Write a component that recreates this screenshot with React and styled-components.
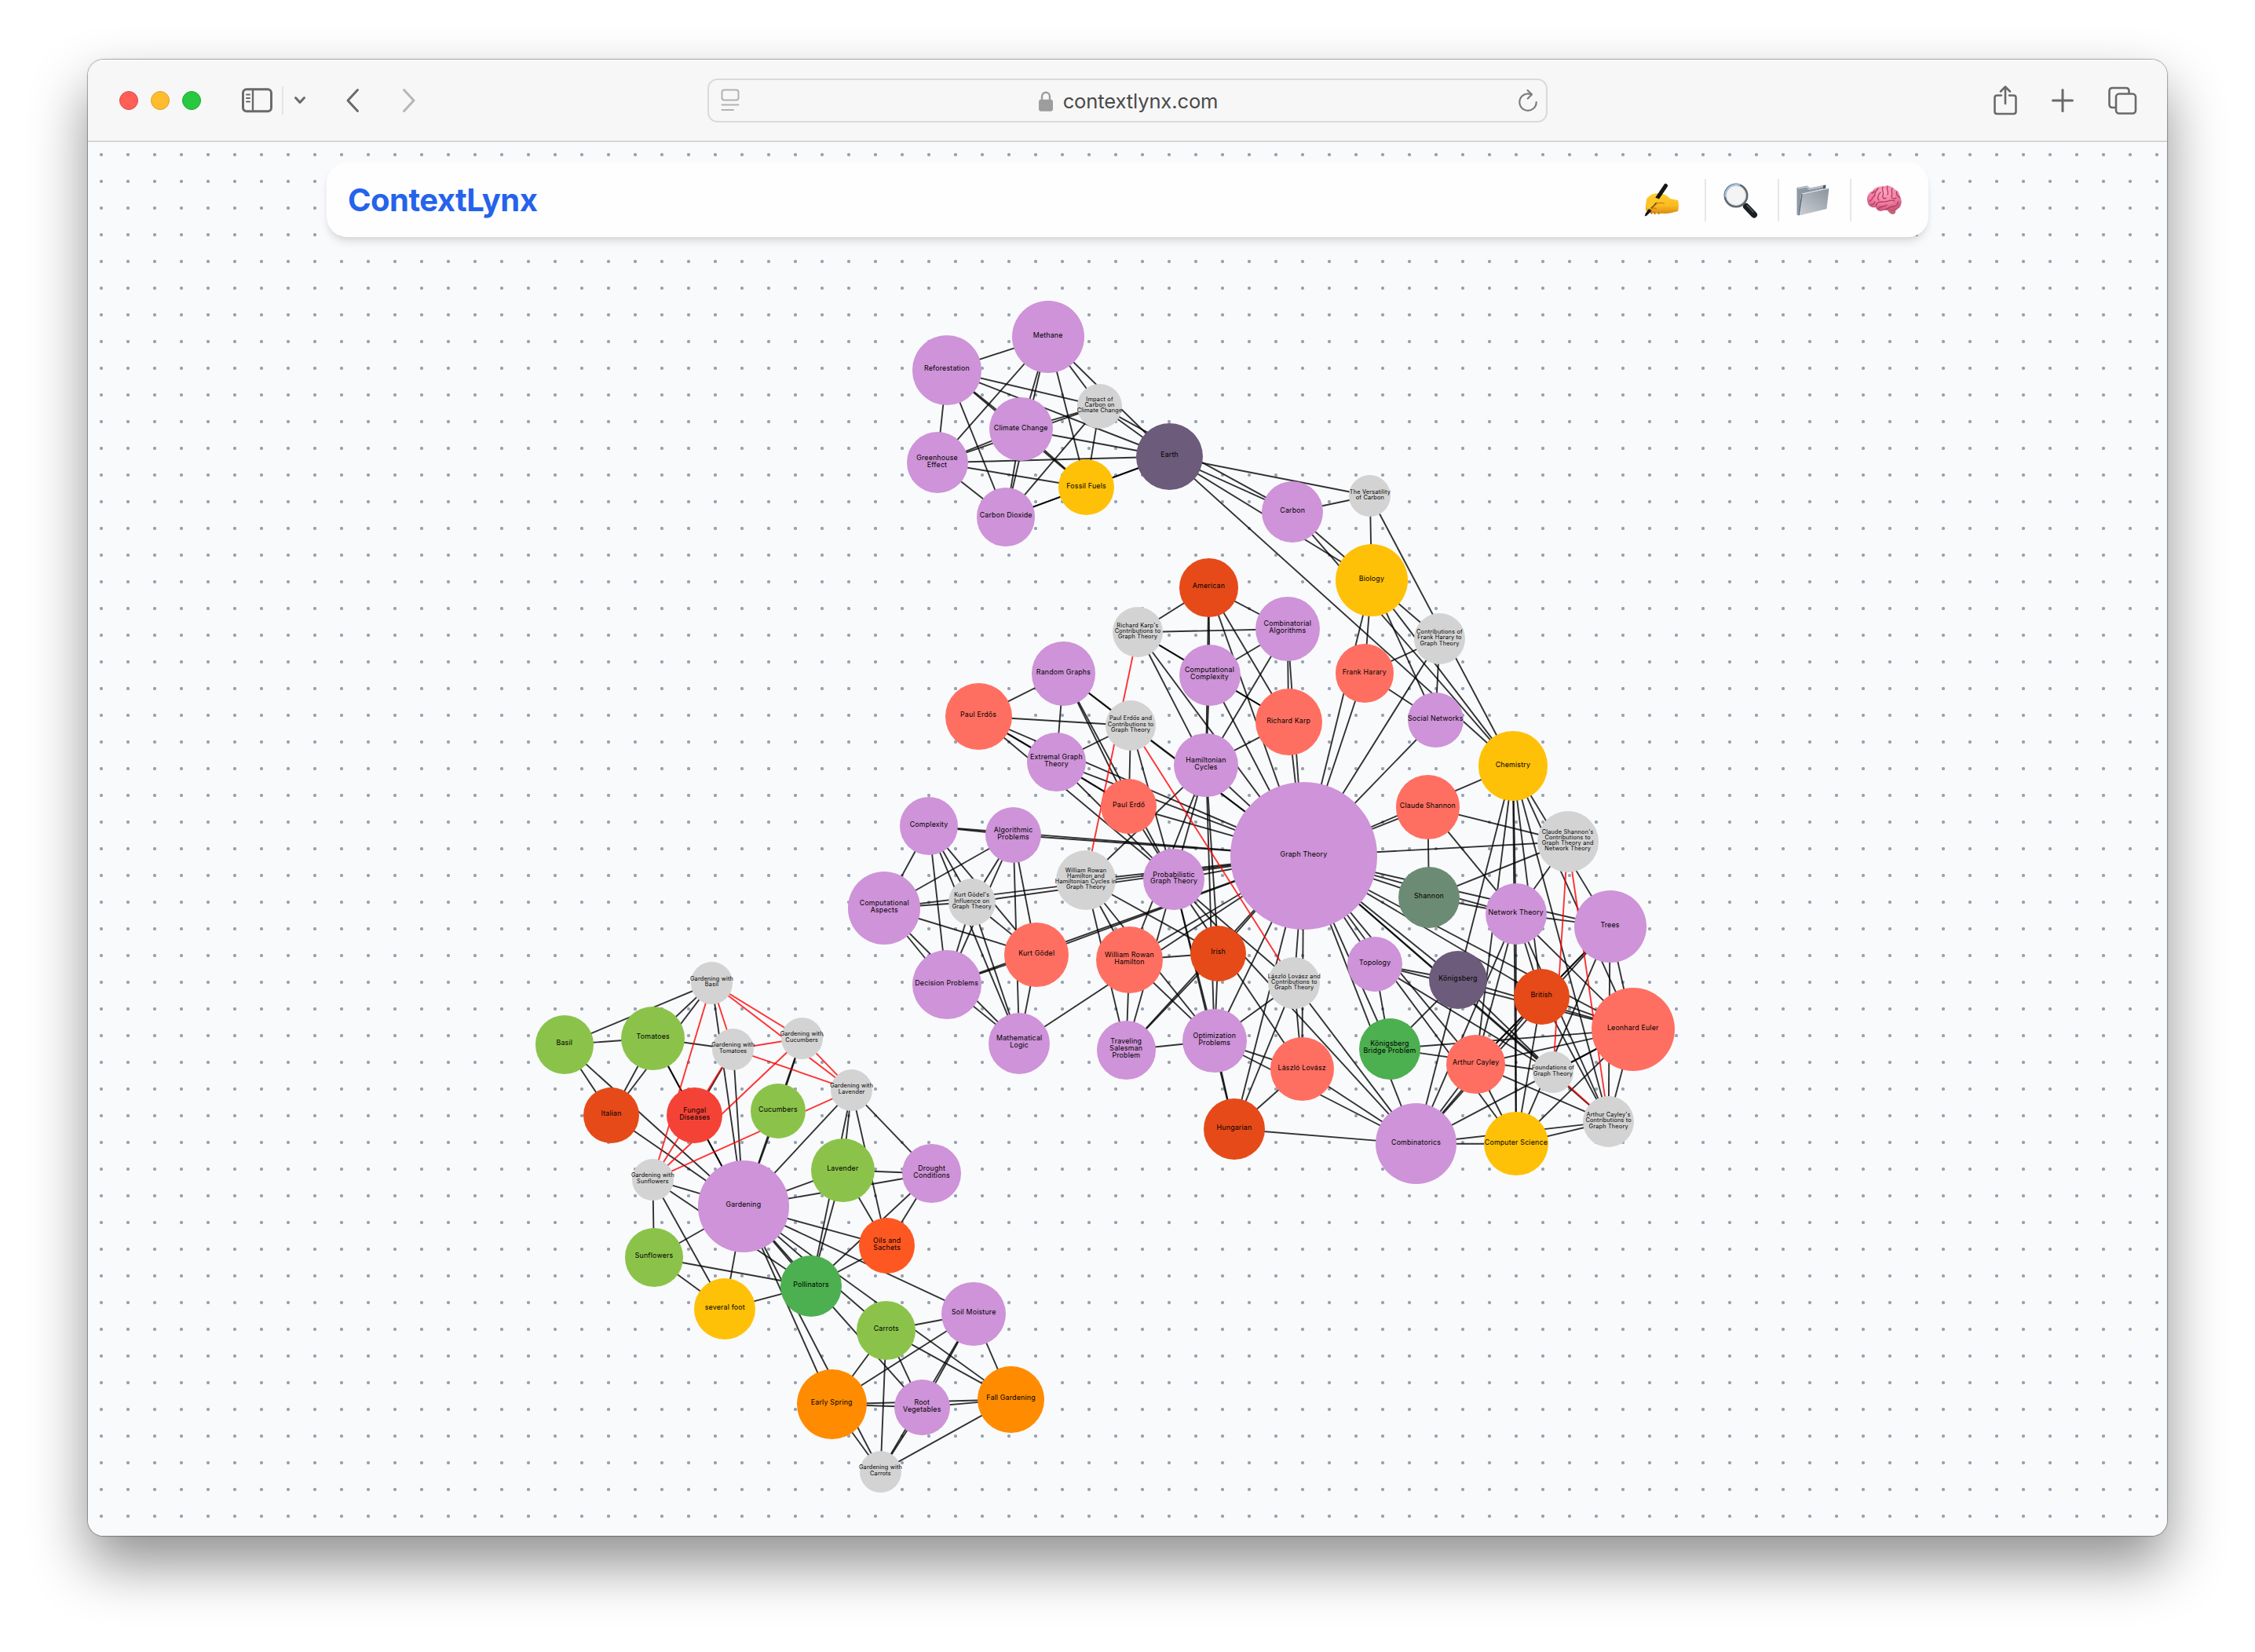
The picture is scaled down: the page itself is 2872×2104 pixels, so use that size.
import React from "react";
import styled, { createGlobalStyle } from "styled-components";

const GlobalStyle = createGlobalStyle`
  * { box-sizing: border-box; }
  html, body { margin: 0; padding: 0; background: #ffffff; }
  body { font-family: Inter, "Liberation Sans", sans-serif; }
`;

const Desktop = styled.div`
  width: 2872px;
  height: 2104px;
  padding: 76px 112px 148px;
  display: flex;
  background: #ffffff;
  overflow: hidden;
`;

const BrowserWindow = styled.div`
  flex: 1;
  display: flex;
  flex-direction: column;
  border-radius: 20px;
  overflow: hidden;
  background: #f9fafc;
  box-shadow: 0 0 0 1px rgba(0, 0, 0, 0.22), 0 0 3px rgba(0, 0, 0, 0.25),
    0 36px 72px rgba(0, 0, 0, 0.44);
`;

const Toolbar = styled.header`
  flex: none;
  height: 105px;
  display: grid;
  grid-template-columns: 789px 1070px 1fr;
  background: #f7f7f7;
  border-bottom: 2px solid #d6d6d6;
  box-shadow: inset 0 1px 0 #ffffff;
`;

const ToolbarLeft = styled.div`
  display: flex;
  align-items: center;
  padding-left: 40px;
`;

const Lights = styled.div`
  display: flex;
  gap: 16px;
  margin-right: 50px;
`;

const Light = styled.span`
  width: 24px;
  height: 24px;
  border-radius: 50%;
  background: ${(p) => p.$fill};
  border: 1px solid ${(p) => p.$edge};
`;

const Divider = styled.span`
  width: 2px;
  height: 36px;
  margin-left: 11px;
  background: #e4e4e4;
`;

const Glyph = styled.svg`
  display: block;
  flex: none;
  width: ${(p) => p.$w}px;
  height: ${(p) => p.$h}px;
  margin-left: ${(p) => p.$ml || 0}px;
  fill: none;
  stroke: ${(p) => p.$color || "#6a6a6a"};
  stroke-width: ${(p) => p.$sw || 2.6};
  stroke-linecap: round;
  stroke-linejoin: round;
`;

const AddressBar = styled.div`
  height: 56px;
  margin-top: 24px;
  padding: 0 10px 0 15px;
  display: grid;
  grid-template-columns: 40px 1fr 40px;
  align-items: center;
  border: 2px solid #dadada;
  border-radius: 13px;
  background: #f7f7f7;
`;

const Address = styled.div`
  display: flex;
  align-items: center;
  justify-content: center;
  gap: 13px;
  padding: 2px 3px 0 0;
  font-size: 25.6px;
  line-height: 30px;
  color: #4a4a4a;
`;

const Host = styled.span`
  letter-spacing: -0.15px;
`;

const ReloadSlot = styled.div`
  display: flex;
  justify-content: flex-end;
`;

const ToolbarRight = styled.div`
  display: flex;
  align-items: center;
  justify-content: flex-end;
  padding-right: 38px;
  gap: 43px;
`;

const Canvas = styled.main`
  position: relative;
  flex: 1;
  background-color: #f9fafc;
  background-image: radial-gradient(circle at center, #9aa3b2 1.7px, rgba(154, 163, 178, 0) 2.5px);
  background-size: 34px 34px;
  background-position: 0 -1px;
`;

const NavBar = styled.nav`
  height: 95px;
  margin: 26px 304px 0;
  padding: 0 15px 0 27px;
  display: flex;
  align-items: center;
  justify-content: space-between;
  border-radius: 26px;
  background: #fefefe;
  box-shadow: 0 8px 12px -2px rgba(0, 0, 0, 0.1), 0 4px 8px -4px rgba(0, 0, 0, 0.1);
`;

const Brand = styled.h1`
  margin: 0;
  padding-top: 1px;
  font-size: 40px;
  font-weight: 700;
  line-height: 56px;
  letter-spacing: -0.5px;
  color: #2563eb;
`;

const NavItems = styled.div`
  display: flex;
  align-items: center;
  height: 54px;
`;

const NavItem = styled.div`
  height: 54px;
  width: ${(p) => p.$w}px;
  padding-right: ${(p) => p.$shift || 0}px;
  display: flex;
  align-items: center;
  justify-content: center;
  border-left: ${(p) => (p.$first ? "0" : "2px solid #e5e7eb")};
`;

const Emoji = styled.svg`
  display: block;
  flex: none;
  width: 46px;
  height: 46px;
`;

const EdgeLayer = styled.svg`
  position: absolute;
  left: 0;
  top: 0;
  width: 2648px;
  height: 1775px;
`;

const Edge = styled.line`
  stroke: ${(p) => (p.$link ? "#ff0000" : "#000000")};
  stroke-width: 1.9;
  stroke-opacity: 0.8;
`;

const NODE_COLORS = {
  concept: "#ce93d8",
  note: "#d3d3d3",
  place: "#6c5b7b",
  field: "#ffc107",
  nationality: "#e64a19",
  person: "#ff6f61",
  org: "#6c8b74",
  plant: "#8bc34a",
  disease: "#f44336",
  problem: "#4caf50",
  product: "#ff5722",
  season: "#ff8c00",
};

const Node = styled.div`
  position: absolute;
  display: flex;
  align-items: center;
  justify-content: center;
  padding-bottom: 3.5px;
  border-radius: 50%;
  text-align: center;
  white-space: pre;
  color: #000000;
  background: ${(p) => NODE_COLORS[p.$kind]};
  font-size: ${(p) => (p.$kind === "note" ? 7.3 : 8.8)}px;
  line-height: ${(p) => (p.$kind === "note" ? 7.2 : 8.8)}px;
  letter-spacing: 0.2px;
`;

const ORIGIN_X = 112;
const ORIGIN_Y = 181;

// id: [x, y, radius, kind, label]
const NODES = {
  M: [1334.7, 429.3, 46.1, "concept", "Methane"],
  R: [1205.9, 471.3, 44.3, "concept", "Reforestation"],
  C: [1300.2, 546.7, 40.7, "concept", "Climate Change"],
  G: [1193.5, 589.3, 39, "concept", "Greenhouse\nEffect"],
  D: [1281.2, 658.3, 37.3, "concept", "Carbon Dioxide"],
  F: [1383.6, 620.7, 35.4, "field", "Fossil Fuels"],
  I: [1400.6, 517.3, 28.3, "note", "Impact of\nCarbon on\nClimate Change"],
  E: [1489.6, 581.5, 42.6, "place", "Earth"],
  Cn: [1646.2, 652.2, 38.9, "concept", "Carbon"],
  V: [1744.9, 631.5, 26.5, "note", "The Versatility\nof Carbon"],
  Bi: [1746.9, 739.3, 46, "field", "Biology"],
  Am: [1539.4, 748.3, 37.3, "nationality", "American"],
  RKc: [1449, 805.3, 32.2, "note", "Richard Karp's\nContributions to\nGraph Theory"],
  CA: [1639.8, 801, 40.9, "concept", "Combinatorial\nAlgorithms"],
  CC: [1540.5, 860, 39, "concept", "Computational\nComplexity"],
  RG: [1354.5, 858, 40.8, "concept", "Random Graphs"],
  PEs: [1246.1, 912.3, 42.6, "person", "Paul Erdős"],
  PEc: [1440.1, 924, 32, "note", "Paul Erdős and\nContributions to\nGraph Theory"],
  Ex: [1345.4, 970.7, 37.3, "concept", "Extremal Graph\nTheory"],
  Ha: [1536, 974.7, 40.7, "concept", "Hamiltonian\nCycles"],
  RK: [1641.2, 919.7, 42.6, "person", "Richard Karp"],
  PE: [1437.7, 1027, 35.4, "person", "Paul Erdő"],
  Cx: [1183.1, 1052.2, 37.3, "concept", "Complexity"],
  Al: [1290.6, 1063.5, 35.5, "concept", "Algorithmic\nProblems"],
  FH: [1737.8, 857.7, 37.3, "person", "Frank Harary"],
  FHc: [1833.5, 813.7, 32.5, "note", "Contributions of\nFrank Harary to\nGraph Theory"],
  SN: [1828.2, 917, 35.4, "concept", "Social Networks"],
  Ch: [1926.9, 975.7, 44.3, "field", "Chemistry"],
  CS: [1818.4, 1027.8, 40.8, "person", "Claude Shannon"],
  CSn: [1996.7, 1072, 39, "note", "Claude Shannon's\nContributions to\nGraph Theory and\nNetwork Theory"],
  GT: [1660.4, 1090.2, 93.8, "concept", "Graph Theory"],
  Sh: [1820, 1142.7, 39, "org", "Shannon"],
  NT: [1930.7, 1164.3, 38.9, "concept", "Network Theory"],
  Tr: [2050.5, 1180, 46, "concept", "Trees"],
  To: [1751.2, 1228, 35.3, "concept", "Topology"],
  K: [1857, 1248, 37.2, "place", "Königsberg"],
  Br: [1963.2, 1269.3, 35.4, "nationality", "British"],
  LE: [2079.7, 1311.3, 53.2, "person", "Leonhard Euler"],
  KB: [1770, 1335.7, 38.9, "problem", "Königsberg\nBridge Problem"],
  AC: [1879.7, 1355.3, 37.3, "person", "Arthur Cayley"],
  Fo: [1978.1, 1365.3, 26.4, "note", "Foundations of\nGraph Theory"],
  ACn: [2048.7, 1428.7, 32.6, "note", "Arthur Cayley's\nContributions to\nGraph Theory"],
  Co: [1803.5, 1456.8, 51.4, "concept", "Combinatorics"],
  Cp: [1930.9, 1456.7, 40.7, "field", "Computer Science"],
  LLc: [1648.3, 1252.2, 33.2, "note", "László Lovász and\nContributions to\nGraph Theory"],
  LL: [1658.2, 1361.7, 40.7, "person", "László Lovász"],
  Hu: [1572, 1438, 39, "nationality", "Hungarian"],
  Op: [1546.8, 1325.5, 40.8, "concept", "Optimization\nProblems"],
  TS: [1434.3, 1337.3, 37.3, "concept", "Traveling\nSalesman\nProblem"],
  Ir: [1551.6, 1214.2, 35.4, "nationality", "Irish"],
  WH: [1438.4, 1222.5, 42.5, "person", "William Rowan\nHamilton"],
  Pr: [1495.1, 1120.2, 38.9, "concept", "Probabilistic\nGraph Theory"],
  WHc: [1383, 1121, 38, "note", "William Rowan\nHamilton and\nHamiltonian Cycles in\nGraph Theory"],
  KGc: [1237.8, 1149, 30, "note", "Kurt Gödel's\nInfluence on\nGraph Theory"],
  CAs: [1126.3, 1156.5, 46.1, "concept", "Computational\nAspects"],
  KG: [1320.2, 1215.8, 40.8, "person", "Kurt Gödel"],
  DP: [1205.7, 1254, 44.2, "concept", "Decision Problems"],
  ML: [1298.2, 1328.8, 39, "concept", "Mathematical\nLogic"],
  gB: [906.5, 1252, 26.6, "note", "Gardening with\nBasil"],
  Tm: [831.8, 1322.3, 40.7, "plant", "Tomatoes"],
  Ba: [718.8, 1330.3, 37.3, "plant", "Basil"],
  gT: [933.7, 1336.3, 26.5, "note", "Gardening with\nTomatoes"],
  gC: [1021.2, 1322.3, 26.5, "note", "Gardening with\nCucumbers"],
  gL: [1084.7, 1388.3, 26.5, "note", "Gardening with\nLavender"],
  It: [778.6, 1420.5, 35.4, "nationality", "Italian"],
  Fu: [884.8, 1420.5, 35.4, "disease", "Fungal\nDiseases"],
  Cu: [991, 1415, 35.4, "plant", "Cucumbers"],
  gS: [831.4, 1502.3, 26.6, "note", "Gardening with\nSunflowers"],
  Ga: [946.9, 1536.5, 58.4, "concept", "Gardening"],
  La: [1073.3, 1490.3, 40.7, "plant", "Lavender"],
  Dr: [1186.6, 1494.7, 37.3, "concept", "Drought\nConditions"],
  Oi: [1129.7, 1586.7, 35.4, "product", "Oils and\nSachets"],
  Sf: [833, 1601.5, 37.4, "plant", "Sunflowers"],
  sf: [923.3, 1667.2, 39, "field", "several foot"],
  Po: [1033, 1638, 39, "problem", "Pollinators"],
  Ca: [1128.7, 1694.3, 37.3, "plant", "Carrots"],
  So: [1240.2, 1673.3, 40.8, "concept", "Soil Moisture"],
  ES: [1059.3, 1788.5, 44.4, "season", "Early Spring"],
  Rt: [1174.3, 1792.3, 35.5, "concept", "Root\nVegetables"],
  Fa: [1287.5, 1782.3, 42.6, "season", "Fall Gardening"],
  gR: [1121.5, 1874.3, 26.6, "note", "Gardening with\nCarrots"],
};

const EDGES = {
  M: "R G C D F I E",
  R: "I E C F G D",
  G: "C I E F D",
  C: "I E F D",
  D: "I F E",
  F: "I E",
  I: "E Cn",
  E: "V Cn Bi Ch",
  Cn: "V Bi Ch",
  V: "Bi Ch",
  Bi: "FH GT FHc SN Ch",
  FHc: "FH SN GT",
  FH: "GT SN",
  SN: "GT",
  Am: "RKc CA CC Ha RK GT",
  RKc: "CA CC RK Ha GT",
  CC: "CA RK Ha GT",
  CA: "RK GT Ha",
  RK: "GT Ha",
  Ha: "GT WHc WH TS Ir Op",
  RG: "PEs PEc Ex PE Pr GT",
  PEs: "PEc Ex PE GT Pr",
  PEc: "GT PE Pr Ex",
  Ex: "PE GT Pr",
  PE: "Pr GT",
  Cx: "Al GT CAs DP KGc ML KG",
  Al: "GT CAs KGc DP ML KG",
  CAs: "KGc GT KG DP ML",
  KGc: "DP ML KG GT",
  KG: "GT DP ML",
  DP: "GT ML",
  ML: "GT",
  WHc: "GT TS WH Op Ir",
  WH: "Ir GT Op TS",
  Pr: "GT Op Hu LL Co LLc",
  Ir: "GT TS Op",
  TS: "GT Op",
  Op: "GT LLc LL Co Hu",
  Hu: "GT LLc LL Co",
  LLc: "GT LL Co",
  LL: "GT Co",
  CS: "GT CSn Sh NT",
  Ch: "GT Co AC NT Cp Br ACn LE Tr",
  CSn: "GT Sh NT",
  Sh: "GT NT",
  GT: "NT Tr Br LE K Fo ACn AC Cp To KB Co",
  NT: "Tr AC Co LE Br ACn Cp",
  To: "Fo K LE KB",
  K: "LE KB Fo",
  KB: "LE Fo",
  Br: "LE AC Co Cp ACn Tr",
  Tr: "AC Co Cp LE ACn",
  LE: "AC Fo Co ACn Cp",
  AC: "ACn Co Cp",
  Cp: "ACn Co",
  Co: "ACn",
  gB: "Ba Tm It Ga",
  Ba: "Tm It Ga",
  It: "Tm Ga",
  Tm: "gT Fu Ga",
  Fu: "Ga gT",
  gT: "Ga",
  gC: "Cu Ga",
  Cu: "Ga",
  gL: "Ga La Po Dr Oi",
  gS: "Ga Sf Po sf",
  La: "Ga Dr Oi Po",
  Dr: "Ga Oi Po",
  Ga: "Oi So Fa Ca Po Rt ES gR sf Sf",
  Oi: "Po",
  Sf: "Po sf",
  sf: "Po",
  Ca: "So ES Rt gR Fa",
  So: "ES Rt gR Fa",
  ES: "gR Rt Fa",
  Rt: "Fa gR",
  Fa: "gR",
};

const NOTE_LINKS = {
  RKc: "WHc",
  PEc: "LLc",
  CSn: "Fo ACn",
  Fo: "ACn",
  gB: "gT gS gC gL",
  gT: "gS gC gL",
  gC: "gL gS",
  gL: "gS",
};

const expand = (map) =>
  Object.entries(map).flatMap(([from, list]) => list.split(" ").map((to) => [from, to]));

function Edges({ map, link }) {
  return expand(map).map(([a, b]) => (
    <Edge
      key={a + "-" + b}
      $link={link}
      x1={NODES[a][0]}
      y1={NODES[a][1]}
      x2={NODES[b][0]}
      y2={NODES[b][1]}
    />
  ));
}

function Graph() {
  return (
    <>
      <EdgeLayer viewBox={`${ORIGIN_X} ${ORIGIN_Y} 2648 1775`}>
        <Edges map={EDGES} />
        <Edges map={NOTE_LINKS} link />
      </EdgeLayer>
      {Object.entries(NODES).map(([id, [x, y, r, kind, label]]) => (
        <Node
          key={id}
          $kind={kind}
          style={{ left: x - r - ORIGIN_X, top: y - r - ORIGIN_Y, width: 2 * r, height: 2 * r }}
        >
          {label}
        </Node>
      ))}
    </>
  );
}

function WritingHand() {
  return (
    <Emoji viewBox="0 0 46 46">
      <defs>
        <linearGradient id="skin" x1="0" y1="0" x2="0" y2="1">
          <stop offset="0" stopColor="#ffd02e" />
          <stop offset="0.6" stopColor="#fdbb22" />
          <stop offset="1" stopColor="#d98c12" />
        </linearGradient>
      </defs>
      <path
        d="M4 22 C6 17 13 14 19 14 C25 14 31 17 34 21 L44 23 C45.500 27 45 33 44 37 C38 38 34 40 28 40 L10 39.500 C5 39 2 36 3 31 Z"
        fill="url(#skin)"
      />
      <path d="M11 34 C15 27 20 25 27 27 M7 37 C10 33 13 32 17 34" fill="none" stroke="#c9820f" strokeWidth="1.300" />
      <path d="M9 37 l2 3.500 M14 38 l1 3 M19 38.500 l1 2.500" stroke="#b8750d" strokeWidth="1.600" />
      <path d="M28.500 4.500 L14 26 L10 30" fill="none" stroke="#161616" strokeWidth="5" strokeLinecap="round" />
      <path d="M7 34 L10.500 36.500 L4.500 42.500 L1.500 43.500 L3 39.500 Z" fill="#161616" />
      <path d="M14 19 C10 22 5 27 4 33 C8 35 12 31 15 27 C17 25 20 24 21 22 Z" fill="#ffc62a" />
    </Emoji>
  );
}

function Magnifier() {
  return (
    <Emoji viewBox="0 0 46 46">
      <path d="M27 27 L31 31" stroke="#8c9196" strokeWidth="4" />
      <path d="M30 31 L40 41.500" stroke="#1b1e21" strokeWidth="8" strokeLinecap="round" />
      <path d="M31 29.500 L39 38" stroke="#585d61" strokeWidth="1.500" strokeLinecap="round" />
      <circle cx="17" cy="17" r="14.200" fill="#f4f4f5" stroke="#5e666e" strokeWidth="2.600" />
      <path d="M3.500 19 A14.200 14.200 0 0 1 22 3.800" fill="none" stroke="#9dbfe6" strokeWidth="2" />
      <circle cx="17" cy="17" r="12.400" fill="none" stroke="#c9ced4" strokeWidth="0.900" />
    </Emoji>
  );
}

function Folder() {
  return (
    <Emoji viewBox="0 0 46 46">
      <defs>
        <linearGradient id="folderFront" x1="1" y1="0" x2="0.200" y2="1">
          <stop offset="0" stopColor="#8b939b" />
          <stop offset="1" stopColor="#c6cbd1" />
        </linearGradient>
      </defs>
      <path d="M2.500 7 L15.500 4.500 L19 7.500 L38.500 3.500 L39.500 8 L8 15 L5 42.500 L2.500 41.500 Z" fill="#8c98a3" />
      <path d="M4 8 L15 5.800 L18.500 9 L37 5" fill="none" stroke="#c3ccd5" strokeWidth="1.500" />
      <path d="M39 8 L39.500 3.500 L36 4.300 L36 10 Z" fill="#4f5b66" />
      <path d="M9 15 L42.500 7.800 C43.200 8 43.500 8.500 43.300 9.300 L40.500 34 L5.500 42.500 L3.800 41.500 Z" fill="url(#folderFront)" />
      <path d="M9 15 L42.500 7.800" stroke="#dfe3e7" strokeWidth="1.200" />
      <path d="M9 15 L5 42" stroke="#5a6873" strokeWidth="1.400" />
    </Emoji>
  );
}

function Brain() {
  return (
    <Emoji viewBox="0 0 46 46">
      <defs>
        <radialGradient id="brainFill" cx="0.500" cy="0.250" r="0.800">
          <stop offset="0" stopColor="#ffa6bf" />
          <stop offset="0.600" stopColor="#ee7a9d" />
          <stop offset="1" stopColor="#bd4a70" />
        </radialGradient>
      </defs>
      <path d="M25 33 C28 38 31 41 34 41 C38 40 38 36 36 32 Z" fill="#c4656f" />
      <path
        d="M2 27 C-1 19 3 13 8 11 C11 6 17 5 21 5.500 C26 3.500 33 5 36 9 C41 11 43 16 43 19 C46 24 45 31 40 34 C37 37 33 37 30 36 C26 36 24 35 22 36 C17 38 13 36 12 32 C8 33 3 31 2 27 Z"
        fill="url(#brainFill)"
      />
      <path
        d="M4 24 C8 24 7 18 11 17 C10 13 13 10 15 8 M12 31 C12 26 17 25 20 25 C26 26 31 21 36 24 M16 23 C13 20 16 15 18 13 M21 6 C19 10 23 13 21 17 C20 20 23 22 25 20 M27 5 C25 9 29 12 27 16 M33 8 C31 11 34 14 32 18 C32 21 36 22 38 20 M39 12 C37 15 40 18 43 20 M7 14 C9 14 10 13 10 11 M24 35 C28 34 29 31 34 31 C38 31 41 28 40 25 M15 34 C17 30 22 32 26 29 M6 29 C9 29 10 27 11 25"
        fill="none"
        stroke="#b03a64"
        strokeWidth="1.300"
        strokeLinecap="round"
      />
    </Emoji>
  );
}

function BrowserToolbar() {
  return (
    <Toolbar>
      <ToolbarLeft>
        <Lights>
          <Light $fill="#ff5f57" $edge="#e2463f" />
          <Light $fill="#febc2e" $edge="#e1a116" />
          <Light $fill="#28c840" $edge="#12ac28" />
        </Lights>
        <Glyph $w={42} $h={36} $sw={3} viewBox="0 0 42 36">
          <rect x="3.500" y="3.700" width="36" height="28" rx="4.500" />
          <path d="M16 4 V31" strokeWidth="2.400" />
          <path d="M8 10.500 h4 M8 15 h4 M8 19.500 h4" strokeWidth="2" />
        </Glyph>
        <Divider />
        <Glyph $w={16} $h={12} $ml={13} $sw={3} viewBox="0 0 16 12">
          <path d="M2.500 2.500 L8 8.500 L13.500 2.500" />
        </Glyph>
        <Glyph $w={20} $h={32} $ml={49} $sw={3} viewBox="0 0 20 32">
          <path d="M16.500 2.500 L4 16 L16.500 29.500" />
        </Glyph>
        <Glyph $w={20} $h={32} $ml={52} $sw={3} $color="#b6b6b6" viewBox="0 0 20 32">
          <path d="M3.500 2.500 L16 16 L3.500 29.500" />
        </Glyph>
      </ToolbarLeft>
      <AddressBar>
        <Glyph $w={24} $h={30} $sw={2} $color="#b2b2b2" viewBox="0 0 24 30">
          <rect x="1.500" y="1.500" width="21" height="13" rx="3" />
          <path d="M1.500 20.500 H22.500 M1.500 27 H16" />
        </Glyph>
        <Address>
          <Glyph $w={18} $h={26} $sw={2.4} $color="#9d9d9d" viewBox="0 0 18 26">
            <rect x="1.200" y="12" width="15.600" height="12.500" rx="1.800" fill="#9d9d9d" />
            <path d="M4 12 V7 C4 0 14 0 14 7 V12" />
          </Glyph>
          <Host>contextlynx.com</Host>
        </Address>
        <ReloadSlot>
          <Glyph $w={26} $h={30} $sw={2.2} $color="#7d7d7d" viewBox="0 0 26 30">
            <path d="M16.500 7 A10.700 10.700 0 1 0 23.700 17" />
            <path d="M12.500 2 L18 7.200 L12.800 12.500" />
          </Glyph>
        </ReloadSlot>
      </AddressBar>
      <ToolbarRight>
        <Glyph $w={32} $h={40} viewBox="0 0 32 40">
          <path d="M11 13.500 H5.500 Q2.500 13.500 2.500 16.500 V34 Q2.500 37 5.500 37 H26.500 Q29.500 37 29.500 34 V16.500 Q29.500 13.500 26.500 13.500 H21" />
          <path d="M16 24 V3 M10 8.500 L16 2.500 L22 8.500" />
        </Glyph>
        <Glyph $w={28} $h={32} $sw={3} viewBox="0 0 28 32">
          <path d="M14 2.500 V29.500 M1.500 16 H26.500" />
        </Glyph>
        <Glyph $w={38} $h={38} viewBox="0 0 38 38">
          <rect x="11" y="10.500" width="25" height="25" rx="4" />
          <path d="M10.500 28 H6.500 Q2.500 28 2.500 24 V7 Q2.500 3 6.500 3 H23.500 Q27.500 3 27.500 7 V10" />
        </Glyph>
      </ToolbarRight>
    </Toolbar>
  );
}

export default function App() {
  return (
    <>
      <GlobalStyle />
      <Desktop>
        <BrowserWindow>
          <BrowserToolbar />
          <Canvas>
            <Graph />
            <NavBar>
              <Brand>ContextLynx</Brand>
              <NavItems>
                <NavItem $first $w={106} $shift={4}>
                  <WritingHand />
                </NavItem>
                <NavItem $w={93} $shift={3}>
                  <Magnifier />
                </NavItem>
                <NavItem $w={92} $shift={4}>
                  <Folder />
                </NavItem>
                <NavItem $w={85}>
                  <Brain />
                </NavItem>
              </NavItems>
            </NavBar>
          </Canvas>
        </BrowserWindow>
      </Desktop>
    </>
  );
}
